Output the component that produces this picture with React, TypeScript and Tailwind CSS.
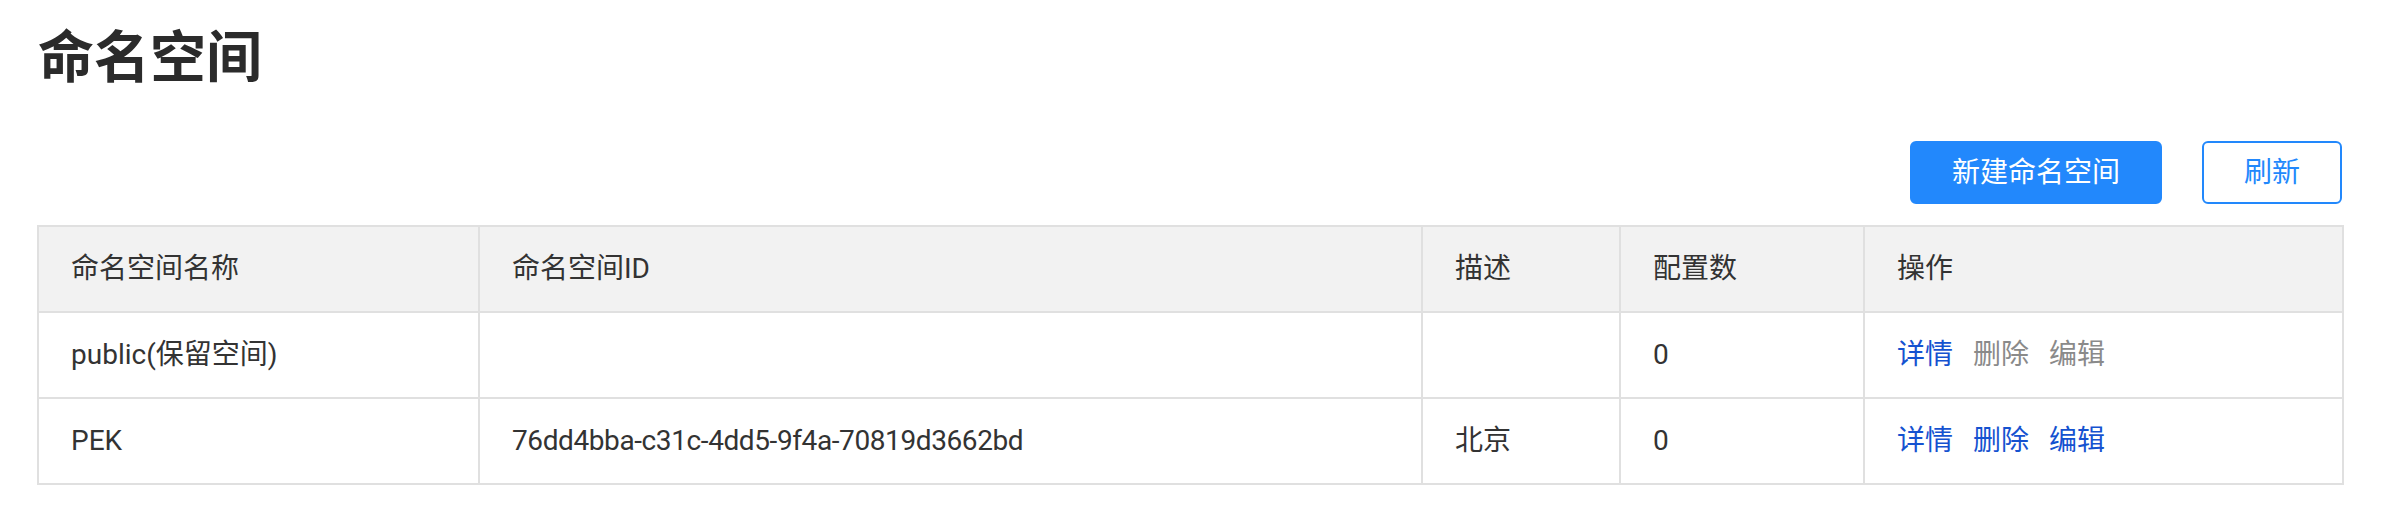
import React from 'react';

const columns = [
  { key: 'name', title: '命名空间名称', width: 'w-[441px]' },
  { key: 'id', title: '命名空间ID', width: 'w-[943px]' },
  { key: 'desc', title: '描述', width: 'w-[198px]' },
  { key: 'count', title: '配置数', width: 'w-[244px]' },
];

const rows = [
  { name: 'public(保留空间)', id: '', desc: '', count: '0', reserved: true },
  { name: 'PEK', id: '76dd4bba-c31c-4dd5-9f4a-70819d3662bd', desc: '北京', count: '0', reserved: false },
];

const App = () => {
  return (
    <div
      className="min-h-[508px] bg-white text-[#333]"
      style={{ fontFamily: 'Roboto, "Noto Sans CJK SC", sans-serif' }}
    >
      <div className="ml-[37px] w-[2307px] pt-[24px]">
        <h1 className="text-[56px] leading-[68px] font-bold text-[#2b2b2b] pl-[1px]">命名空间</h1>

        <div className="mt-[49px] flex justify-end gap-[40px] pr-[2px]">
          <button className="h-[63px] px-10 border-2 border-[#2288fc] bg-[#2288fc] text-white text-[28px] rounded-[6px]">
            新建命名空间
          </button>
          <button className="h-[63px] px-10 border-2 border-[#2288fc] bg-white text-[#2288fc] text-[28px] rounded-[6px]">
            刷新
          </button>
        </div>

        <div className="mt-[21px] border-2 border-[#e0e0e0] text-[28px]">
          {/* header */}
          <div className="flex h-[84px] bg-[#f2f2f2] border-b-2 border-[#e0e0e0] box-content">
            {columns.map((c) => (
              <div key={c.key} className={`${c.width} shrink-0 flex items-center px-8 border-r-2 border-[#e0e0e0]`}>
                {c.title}
              </div>
            ))}
            <div className="flex-1 flex items-center px-8">操作</div>
          </div>

          {rows.map((r, i) => (
            <div
              key={r.name}
              className={`flex h-[84px] box-content ${i < rows.length - 1 ? 'border-b-2 border-[#e0e0e0]' : ''}`}
            >
              <div className="w-[441px] shrink-0 flex items-center px-8 border-r-2 border-[#e0e0e0]">{r.name}</div>
              <div className="w-[943px] shrink-0 flex items-center px-8 border-r-2 border-[#e0e0e0] tracking-[-0.4px]">{r.id}</div>
              <div className="w-[198px] shrink-0 flex items-center px-8 border-r-2 border-[#e0e0e0]">{r.desc}</div>
              <div className="w-[244px] shrink-0 flex items-center px-8 border-r-2 border-[#e0e0e0]">{r.count}</div>
              <div className="flex-1 flex items-center gap-[20px] px-8">
                <a className="text-[#1552d0] cursor-pointer">详情</a>
                <a className={r.reserved ? 'text-[#8a8a8a]' : 'text-[#1552d0] cursor-pointer'}>删除</a>
                <a className={r.reserved ? 'text-[#8a8a8a]' : 'text-[#1552d0] cursor-pointer'}>编辑</a>
              </div>
            </div>
          ))}
        </div>
      </div>
    </div>
  );
};

export default App;
